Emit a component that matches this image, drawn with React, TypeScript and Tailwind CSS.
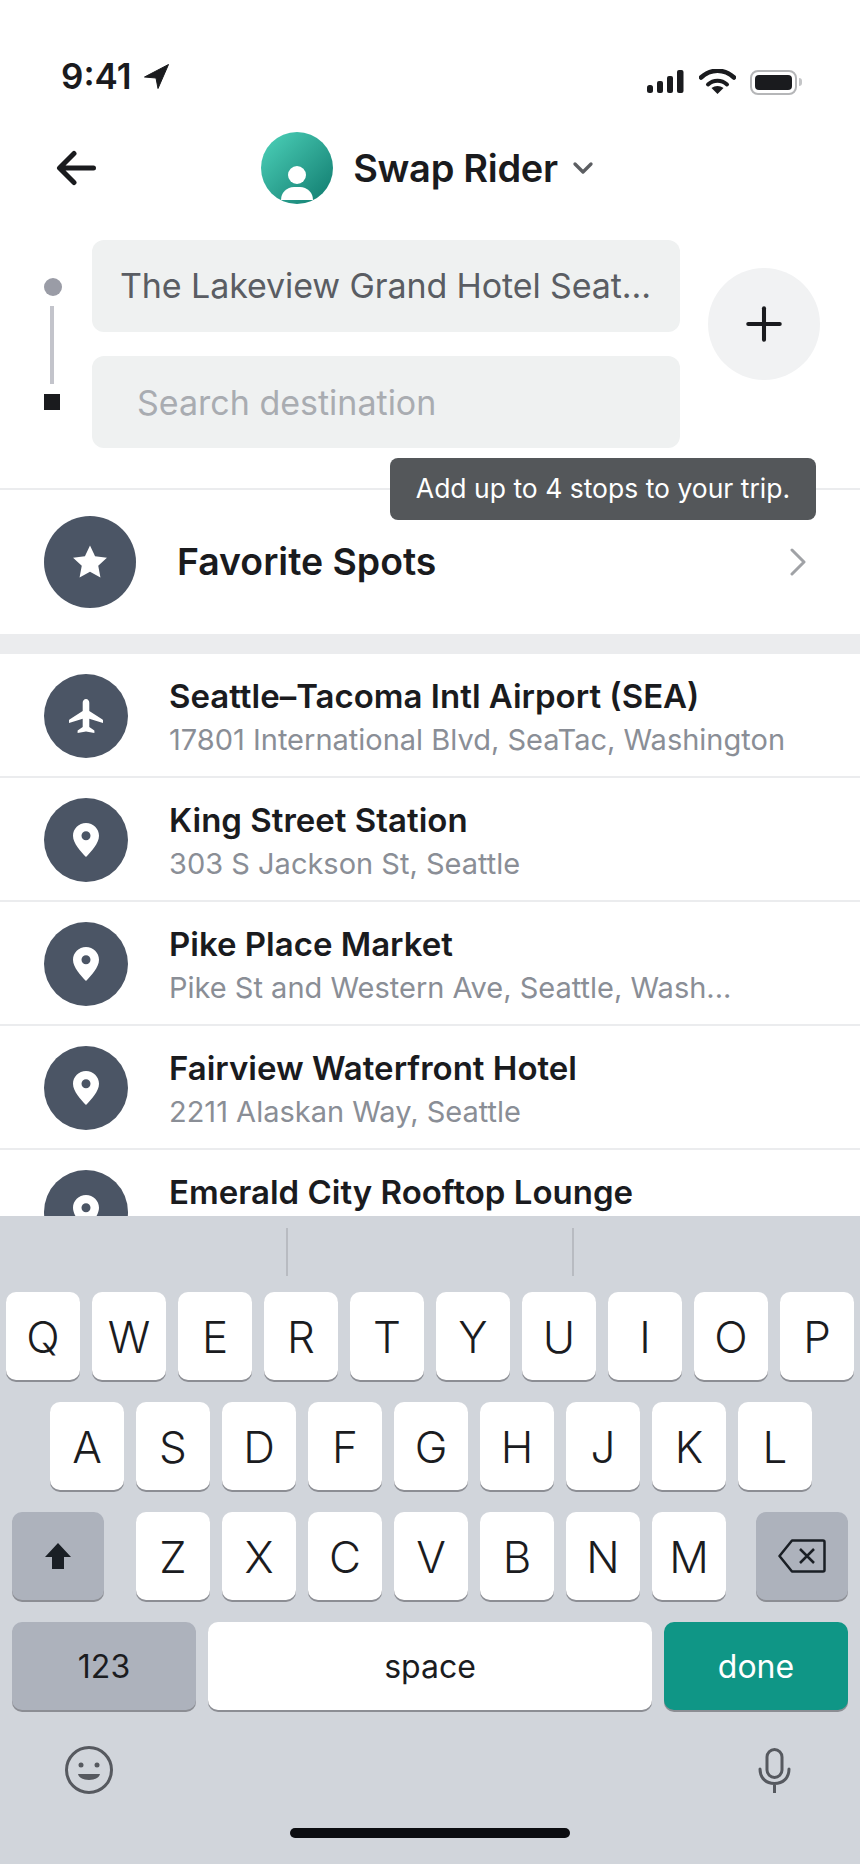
import { ChevronDown, Plus } from "lucide-react";

const places = [
  { title: "Seattle–Tacoma Intl Airport (SEA)", sub: "17801 International Blvd, SeaTac, Washington", icon: "plane" },
  { title: "King Street Station", sub: "303 S Jackson St, Seattle", icon: "pin" },
  { title: "Pike Place Market", sub: "Pike St and Western Ave, Seattle, Wash...", icon: "pin" },
  { title: "Fairview Waterfront Hotel", sub: "2211 Alaskan Way, Seattle", icon: "pin" },
  { title: "Emerald City Rooftop Lounge", sub: "", icon: "pin" },
];

function PinIcon() {
  return (
    <svg width="26" height="34" viewBox="0 0 26 34">
      <path
        fillRule="evenodd"
        fill="#fff"
        d="M13 0C5.800 0 0 5.700 0 12.800 0 20.500 8 29 13 34c5-5 13-13.500 13-21.200C26 5.700 20.200 0 13 0Zm0 8.300a4.500 4.500 0 1 1 0 9 4.500 4.500 0 0 1 0-9Z"
      />
    </svg>
  );
}

function PlaneIcon() {
  return (
    <svg width="34" height="35" viewBox="0 0 34 35">
      <path
        fill="#fff"
        d="M17 0c2 0 3.300 1.800 3.300 3.800V12L33.500 20.600c.4.300.5.600.5 1v2.300L20.300 19.800V28l4.700 3.300c.3.200.4.500.4.800V34L17 32.600 8.600 34v-1.900c0-.3.100-.6.400-.8L13.700 28v-8.200L0 23.900v-2.300c0-.4.100-.7.500-1L13.700 12V3.800C13.700 1.800 15 0 17 0Z"
      />
    </svg>
  );
}

function Key({ label }: { label: string }) {
  return (
    <div className="w-[74px] h-[88px] pt-[2px] rounded-[10px] bg-white shadow-[0_2px_0_#8c8e94] flex items-center justify-center text-[44px] font-light text-[#1b1c1f]">
      {label}
    </div>
  );
}

export default function App() {
  return (
    <div className="relative w-[860px] h-[1864px] flex flex-col overflow-hidden bg-white text-[#1a1b1e] font-['Inter',sans-serif]">
      {/* Status bar */}
      <div className="h-[112px] shrink-0 flex items-start justify-between pt-[56px] pl-[61px] pr-[58px]">
        <div className="flex items-center gap-[12px]">
          <span className="text-[35px] leading-[40px] font-semibold">9:41</span>
          <svg width="25" height="25" viewBox="0 0 25 25">
            <path fill="#1a1b1e" stroke="#1a1b1e" strokeLinejoin="round" d="M24.500.5 .5 13l11.500 1 2 10.500Z" />
          </svg>
        </div>
        <div className="flex items-center gap-[15px] pt-[13px]">
          <svg width="37" height="24" viewBox="0 0 37 24">
            <rect x="0" y="15" width="6" height="8" rx="2.500" fill="#1a1b1e" />
            <rect x="10" y="11" width="6" height="12" rx="2" fill="#1a1b1e" />
            <rect x="20" y="6" width="6" height="17" rx="2" fill="#1a1b1e" />
            <rect x="30" y="0" width="6.500" height="23" rx="2" fill="#1a1b1e" />
          </svg>
          <svg width="37" height="26" viewBox="0 0 37 26">
            <path d="M2 8.500C11.500 -0.500 25.500 -0.500 35 8.500" fill="none" stroke="#1a1b1e" strokeWidth="4.500" strokeLinecap="round" />
            <path d="M9 15.500C14.500 10.500 22.500 10.500 28 15.500" fill="none" stroke="#1a1b1e" strokeWidth="4" strokeLinecap="round" />
            <path d="M18.500 25l-6-6c3.500-2.800 8.500-2.800 12 0Z" fill="#1a1b1e" />
          </svg>
          <div className="flex items-center gap-[2px] -ml-[1px]">
            <div className="w-[47px] h-[25px] rounded-[8px] border-2 border-[#b5b6b8] p-[3px]">
              <div className="w-full h-full rounded-[4px] bg-[#1a1b1e]" />
            </div>
            <div className="w-[3px] h-[8px] rounded-r-[3px] bg-[#c4c5c7]" />
          </div>
        </div>
      </div>

      {/* Header */}
      <div className="relative h-[112px] shrink-0 flex items-center justify-center">
        <svg className="absolute left-[56px] top-[38px]" width="40" height="36" viewBox="0 0 40 36">
          <path d="M37.500 18H4M18 3.500 3.500 18 18 32.500" fill="none" stroke="#1a1b1e" strokeWidth="5" strokeLinecap="round" strokeLinejoin="round" />
        </svg>
        <div className="relative w-[72px] h-[72px] rounded-full overflow-hidden bg-gradient-to-br from-[#4dd4bb] to-[#0b7a6e]">
          <div className="absolute left-[27px] top-[34px] w-[18px] h-[18px] rounded-full bg-white" />
          <div className="absolute left-[20px] top-[55px] w-[32px] h-[13px] rounded-t-[16px] bg-white" />
        </div>
        <span className="ml-[20px] text-[38px] leading-[44px] font-semibold tracking-[-0.3px]">Swap Rider</span>
        <ChevronDown className="ml-[9px]" size={32} color="#5c5e62" strokeWidth={2.500} />
      </div>

      {/* Route inputs */}
      <div className="h-[266px] shrink-0 flex items-start border-b-2 border-[#ebecee] pt-[16px]">
        <div className="w-[92px] shrink-0 flex flex-col items-start pl-[44px] pt-[38px]">
          <div className="w-[18px] h-[18px] rounded-full bg-[#9a9ca6]" />
          <div className="w-[4px] h-[78px] bg-[#c3c4cb] mt-[10px] ml-[6px]" />
          <div className="w-[16px] h-[16px] bg-[#1a1b1e] mt-[10px]" />
        </div>
        <div className="w-[588px] shrink-0 flex flex-col gap-[24px]">
          <div className="h-[92px] rounded-[12px] bg-[#eff1f1] flex items-center pl-[28px] pb-[2px] text-[34px] tracking-[-0.1px] text-[#5a5d63]">
            The Lakeview Grand Hotel Seat...
          </div>
          <div className="h-[92px] rounded-[12px] bg-[#eff1f1] flex items-center pl-[45px] text-[34px] text-[#a9acb1]">
            Search destination
          </div>
        </div>
        <div className="ml-[28px] mt-[28px] w-[112px] h-[112px] rounded-full bg-[#f1f2f3] flex items-center justify-center">
          <Plus size={54} color="#1a1b1e" strokeWidth={1.800} />
        </div>
      </div>

      {/* Tooltip */}
      <div className="absolute left-[390px] top-[458px] w-[426px] h-[62px] rounded-[8px] bg-[#54575a] flex items-center justify-center text-[26.500px] text-white">
        Add up to 4 stops to your trip.
      </div>

      {/* Favorites */}
      <div className="h-[144px] shrink-0 flex items-center pl-[44px] pr-[54px]">
        <div className="w-[92px] h-[92px] rounded-full bg-[#4b5565] flex items-center justify-center">
          <svg width="38" height="38" viewBox="0 0 24 24">
            <path fill="#fff" d="M12 1.500l3.200 6.900 7.500.9-5.500 5.100 1.400 7.400L12 18.200l-6.600 3.600 1.400-7.400L1.300 9.300l7.500-.9Z" />
          </svg>
        </div>
        <span className="ml-[41px] text-[37.400px] font-semibold flex-1">Favorite Spots</span>
        <svg width="16" height="28" viewBox="0 0 16 28">
          <path d="M2 2l12 12L2 26" fill="none" stroke="#a0a2a6" strokeWidth="3" strokeLinecap="round" strokeLinejoin="round" />
        </svg>
      </div>
      <div className="h-[20px] shrink-0 bg-[#ebecee]" />

      {/* Places */}
      <div className="flex-1 min-h-0 overflow-hidden">
        {places.map((p) => (
          <div key={p.title} className="h-[124px] flex items-center pl-[44px] pt-[2px] border-b-2 border-[#ebecee]">
            <div className="w-[84px] h-[84px] shrink-0 rounded-full bg-[#4b5565] flex items-center justify-center">
              {p.icon === "plane" ? <PlaneIcon /> : <PinIcon />}
            </div>
            <div className="ml-[41px] min-w-0 pt-[3px]">
              <div className="text-[33px] leading-[42px] font-semibold whitespace-nowrap">{p.title}</div>
              <div className="mt-[3px] h-[40px] text-[29px] leading-[40px] text-[#8a8e96] whitespace-nowrap">{p.sub}</div>
            </div>
          </div>
        ))}
      </div>

      {/* Keyboard */}
      <div className="relative h-[648px] shrink-0 bg-[#d1d5db]">
        <div className="h-[76px] flex justify-center gap-[284px] pt-[12px]">
          <div className="w-[2px] h-[48px] bg-[#b8bbc1]" />
          <div className="w-[2px] h-[48px] bg-[#b8bbc1]" />
        </div>
        <div className="flex flex-col gap-[22px]">
          <div className="flex justify-center gap-[12px]">
            {["Q", "W", "E", "R", "T", "Y", "U", "I", "O", "P"].map((k) => (
              <Key key={k} label={k} />
            ))}
          </div>
          <div className="flex justify-center gap-[12px] pl-[2px]">
            {["A", "S", "D", "F", "G", "H", "J", "K", "L"].map((k) => (
              <Key key={k} label={k} />
            ))}
          </div>
          <div className="flex px-[12px] justify-between">
            <div className="w-[92px] h-[88px] rounded-[10px] bg-[#adb2bc] shadow-[0_2px_0_#8c8e94] flex items-center justify-center">
              <svg width="28" height="28" viewBox="0 0 28 28">
                <path fill="#1a1f25" d="M14 1 1 15h7v12h12V15h7Z" />
              </svg>
            </div>
            <div className="flex gap-[12px] ml-[2px]">
              {["Z", "X", "C", "V", "B", "N", "M"].map((k) => (
                <Key key={k} label={k} />
              ))}
            </div>
            <div className="w-[92px] h-[88px] rounded-[10px] bg-[#adb2bc] shadow-[0_2px_0_#8c8e94] flex items-center justify-center">
              <svg width="48" height="34" viewBox="0 0 48 34">
                <path d="M14 1.500h31a1.500 1.500 0 0 1 1.500 1.500v28a1.500 1.500 0 0 1-1.500 1.500H14L1.500 17Z" fill="none" stroke="#1a1f25" strokeWidth="2.500" strokeLinejoin="round" />
                <path d="M22 10l14 14M36 10 22 24" fill="none" stroke="#1a1f25" strokeWidth="2.500" />
              </svg>
            </div>
          </div>
          <div className="flex px-[12px] gap-[12px]">
            <div className="w-[184px] h-[88px] pt-[2px] rounded-[10px] bg-[#adb2bc] shadow-[0_2px_0_#8c8e94] flex items-center justify-center text-[32px] text-[#1b1c1f]">
              123
            </div>
            <div className="flex-1 h-[88px] pt-[2px] rounded-[10px] bg-white shadow-[0_2px_0_#8c8e94] flex items-center justify-center text-[32px] text-[#1b1c1f]">
              space
            </div>
            <div className="w-[184px] h-[88px] pt-[2px] rounded-[10px] bg-[#0f9686] shadow-[0_2px_0_#8c8e94] flex items-center justify-center text-[32px] text-white">
              done
            </div>
          </div>
        </div>
        <div className="flex justify-between pl-[65px] pr-[69px] mt-[36px] items-center">
          <svg width="48" height="48" viewBox="0 0 48 48">
            <circle cx="24" cy="24" r="22.500" fill="none" stroke="#56595f" strokeWidth="3" />
            <circle cx="16" cy="19" r="2.500" fill="#56595f" />
            <circle cx="32" cy="19" r="2.500" fill="#56595f" />
            <path d="M13 28h22c-1 4-6 6-11 6s-10-2-11-6Z" fill="#56595f" />
          </svg>
          <svg width="33" height="45" viewBox="0 0 33 45">
            <rect x="9" y="1.500" width="15" height="28" rx="7.500" fill="none" stroke="#56595f" strokeWidth="3" />
            <path d="M2 21c0 9 6 14.500 14.500 14.500S31 30 31 21M16.500 35.500V45" fill="none" stroke="#56595f" strokeWidth="3" strokeLinecap="round" />
          </svg>
        </div>
        <div className="absolute left-[290px] bottom-[26px] w-[280px] h-[10px] rounded-full bg-[#0b0c10]" />
      </div>
    </div>
  );
}
